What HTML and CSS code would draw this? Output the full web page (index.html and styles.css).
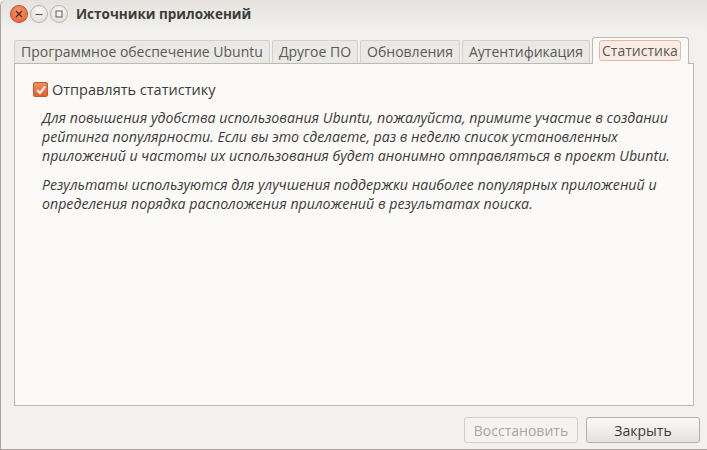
FILE: index.html
```html
<!DOCTYPE html>
<html lang="ru">
<head>
<meta charset="utf-8">
<link rel="stylesheet" href="styles.css">
</head>
<body>
<div class="window">
  <div class="titlebar">
    <div class="wbtns">
      <span class="wbtn close"><svg width="8" height="8" viewBox="0 0 8 8"><path d="M1 1L7 7M7 1L1 7" stroke="#4a2a1c" stroke-width="1.4"/></svg></span>
      <span class="wbtn"><svg width="8" height="8" viewBox="0 0 8 8"><path d="M0.5 4.5H7.5" stroke="#5c5a56" stroke-width="1.2"/></svg></span>
      <span class="wbtn"><svg width="8" height="8" viewBox="0 0 8 8"><rect x="1" y="1" width="6" height="6" fill="none" stroke="#5c5a56" stroke-width="1"/></svg></span>
    </div>
    <div class="title">Источники приложений</div>
  </div>
  <div class="content">
    <div class="tabs">
      <div class="tab">Программное обеспечение Ubuntu</div>
      <div class="tab">Другое ПО</div>
      <div class="tab">Обновления</div>
      <div class="tab">Аутентификация</div>
      <div class="tab active"><span class="focus">Статистика</span></div>
    </div>
    <div class="panel">
      <div class="check-row">
        <span class="checkbox"><svg width="12" height="12" viewBox="0 0 12 12"><path d="M2.2 6.2L5 9L10 2.6" fill="none" stroke="#fff" stroke-width="2"/></svg></span>
        <span class="check-label">Отправлять статистику</span>
      </div>
      <div class="desc">
        <p>Для повышения удобства использования Ubuntu, пожалуйста, примите участие в создании<br>рейтинга популярности. Если вы это сделаете, раз в неделю список установленных<br>приложений и частоты их использования будет анонимно отправляться в проект Ubuntu.</p>
        <p>Результаты используются для улучшения поддержки наиболее популярных приложений и<br>определения порядка расположения приложений в результатах поиска.</p>
      </div>
    </div>
    <div class="actions">
      <button class="btn disabled">Восстановить</button>
      <button class="btn">Закрыть</button>
    </div>
  </div>
</div>
</body>
</html>
```
FILE: styles.css
```css
html, body {
  margin: 0;
  padding: 0;
  width: 707px;
  height: 450px;
  overflow: hidden;
  background: #f2f1f0;
}
.window {
  box-sizing: border-box;
  width: 707px;
  height: 450px;
  border-left: 1px solid #a8a49d;
  border-bottom: 1px solid #a8a49d;
  border-top-left-radius: 6px;
  background: #f2f1f0;
  font-family: "Open Sans", "Liberation Sans", sans-serif;
  color: #3c3b37;
  display: flex;
  flex-direction: column;
}
.titlebar {
  height: 29px;
  display: flex;
  align-items: center;
  background: linear-gradient(#e6e3de, #f0efed);
  border-top-left-radius: 6px;
}
.wbtns {
  display: flex;
  align-items: center;
  gap: 2px;
  padding-left: 9px;
}
.wbtn {
  width: 16px;
  height: 16px;
  border-radius: 50%;
  border: 1px solid #b9b5ae;
  background: radial-gradient(circle at 50% 35%, #fbfaf9, #dcd9d4);
  display: flex;
  align-items: center;
  justify-content: center;
}
.wbtn.close {
  border-color: #b8532c;
  background: radial-gradient(circle at 50% 35%, #f79b6e, #e8582a);
}
.title {
  margin-left: 8px;
  font-weight: bold;
  font-size: 13.5px;
  color: #3c3b37;
}
.content {
  flex: 1;
  display: flex;
  flex-direction: column;
  padding: 11px 7px 6px 13px;
}
.tabs {
  display: flex;
  align-items: flex-end;
  gap: 2px;
  height: 24px;
  margin-right: 6px;
}
.tab {
  box-sizing: border-box;
  height: 23px;
  padding: 0 6px;
  font-size: 14px;
  line-height: 21px;
  color: #5a5955;
  background: #ebe9e6;
  border: 1px solid #d4d0ca;
  border-bottom: none;
  border-radius: 2px 2px 0 0;
  white-space: nowrap;
}
.tab.active {
  height: 27px;
  padding: 2px 7px 0 6px;
  background: #fbfaf9;
  border-color: #bdb8b0;
  margin-bottom: -1px;
  position: relative;
  z-index: 1;
  border-radius: 3px 3px 0 0;
}
.focus {
  display: inline-block;
  border: 1px solid #eab6a2;
  border-radius: 3px;
  background: #fbebe4;
  padding: 0 2px;
  line-height: 19px;
  color: #5a5955;
}
.panel {
  height: 343px;
  box-sizing: border-box;
  margin-right: 6px;
  background: #fbfaf9;
  border: 1px solid #bdb8b0;
  padding: 16px 18px 0 18px;
}
.check-row {
  display: flex;
  align-items: center;
  gap: 4px;
}
.checkbox {
  width: 13px;
  height: 13px;
  border: 1px solid #c3582a;
  border-radius: 2px;
  background: linear-gradient(#f08d5c, #e2622f);
  display: flex;
  align-items: center;
  justify-content: center;
}
.check-label {
  font-size: 14.5px;
  color: #3c3b37;
}
.desc {
  padding-left: 9px;
  margin-top: 9px;
  font-style: italic;
  font-size: 14.2px;
  line-height: 19px;
  color: #3c3b37;
  white-space: nowrap;
}
.desc p {
  margin: 0 0 10px 0;
}
.actions {
  display: flex;
  justify-content: flex-end;
  gap: 8px;
  margin-top: 11px;
}
.btn {
  box-sizing: border-box;
  width: 114px;
  height: 26px;
  font-family: "Open Sans", "Liberation Sans", sans-serif;
  font-size: 14px;
  color: #3c3b37;
  border: 1px solid #b4afa7;
  border-radius: 3px;
  background: linear-gradient(#fbfaf9, #e5e2de);
  padding: 0;
}
.btn.disabled {
  color: #aaa6a0;
  border-color: #d3cfc9;
  background: #f4f3f1;
}
```
